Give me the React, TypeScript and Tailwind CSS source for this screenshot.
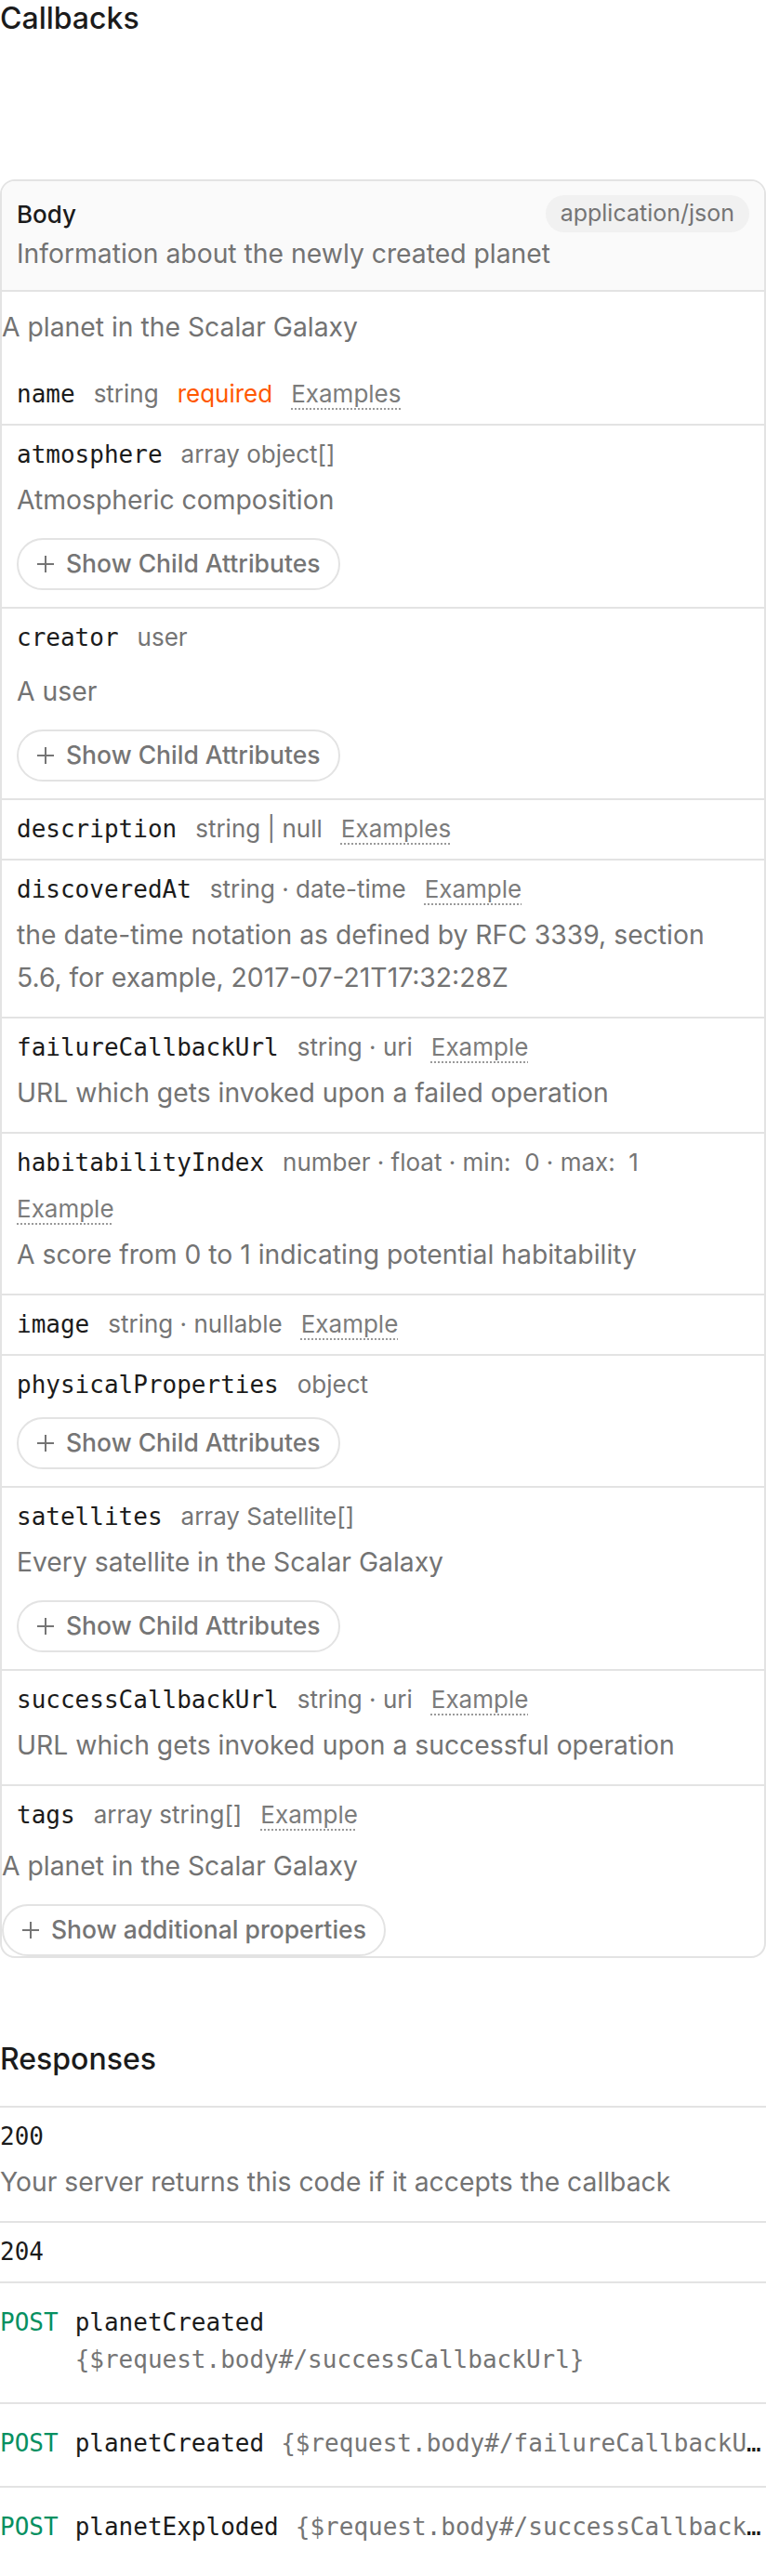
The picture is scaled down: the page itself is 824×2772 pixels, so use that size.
type Prop = {
  name: string;
  type: string;
  required?: boolean;
  example?: string;
  desc?: string;
  descFar?: boolean;
  child?: boolean;
};

const props: Prop[] = [
  { name: 'name', type: 'string', required: true, example: 'Examples' },
  { name: 'atmosphere', type: 'array object[]', desc: 'Atmospheric composition', child: true },
  { name: 'creator', type: 'user', desc: 'A user', descFar: true, child: true },
  { name: 'description', type: 'string | null', example: 'Examples' },
  {
    name: 'discoveredAt',
    type: 'string · date-time',
    example: 'Example',
    desc: 'the date-time notation as defined by RFC 3339, section\n5.6, for example, 2017-07-21T17:32:28Z',
  },
  {
    name: 'failureCallbackUrl',
    type: 'string · uri',
    example: 'Example',
    desc: 'URL which gets invoked upon a failed operation',
  },
  {
    name: 'habitabilityIndex',
    type: 'number · float · min:\u00a0\u00a00 · max:\u00a0\u00a01',
    example: 'Example',
    desc: 'A score from 0 to 1 indicating potential habitability',
  },
  { name: 'image', type: 'string · nullable', example: 'Example' },
  { name: 'physicalProperties', type: 'object', child: true },
  { name: 'satellites', type: 'array Satellite[]', desc: 'Every satellite in the Scalar Galaxy', child: true },
  {
    name: 'successCallbackUrl',
    type: 'string · uri',
    example: 'Example',
    desc: 'URL which gets invoked upon a successful operation',
  },
  { name: 'tags', type: 'array string[]', example: 'Example' },
];

function PlusIcon() {
  return (
    <svg width="18" height="18" viewBox="0 0 18 18" fill="none" stroke="#757575" strokeWidth="2">
      <path d="M9 0v18M0 9h18" />
    </svg>
  );
}

function ShowButton({ label, className = '' }: { label: string; className?: string }) {
  return (
    <button
      className={`flex h-[56px] items-center gap-[13px] rounded-full border-2 border-[#e3e3e3] pl-[20px] pr-[19px] text-[26.5px] font-medium text-[#757575] ${className}`}
    >
      <PlusIcon />
      {label}
    </button>
  );
}

function PropertyRow({ p, first }: { p: Prop; first: boolean }) {
  return (
    <div
      className={`flex flex-col items-start px-4 pt-[11px] pb-[12px] ${first ? '' : 'border-t-2 border-[#e3e3e3]'}`}
    >
      <div className="flex flex-wrap items-baseline gap-x-[20px] gap-y-[10px]">
        <span className="font-['DejaVu_Sans_Mono',monospace] text-[26px] leading-[40px] text-[#1b1b1b]">
          {p.name}
        </span>
        <span className="text-[26px] leading-[40px] text-[#757575]">{p.type}</span>
        {p.required && <span className="text-[26px] leading-[40px] text-[#ff5800]">required</span>}
        {p.example && (
          <span className="text-[26px] leading-[40px] text-[#7c7c7c] underline decoration-dotted decoration-[#9a9a9a] decoration-2 underline-offset-[6px]">
            {p.example}
          </span>
        )}
      </div>
      {p.desc && (
        <p
          className={`whitespace-pre-line text-[28.3px] leading-[46px] text-[#737373] ${p.descFar ? 'mt-[15px]' : 'mt-[6px]'} mb-[7px]`}
        >
          {p.desc}
        </p>
      )}
      {p.child && (
        <ShowButton label="Show Child Attributes" className={`mb-[6px] ${p.desc ? 'mt-[11px]' : 'mt-[15px]'}`} />
      )}
    </div>
  );
}

function CallbackRow({ name, path, wrap }: { name: string; path: string; wrap?: boolean }) {
  return (
    <div className="border-t-2 border-[#e3e3e3] pt-[22px] pb-[26px] font-['DejaVu_Sans_Mono',monospace] text-[26px] leading-[40px]">
      {wrap ? (
        <div className="flex gap-[18px]">
          <span className="text-[#069061]">POST</span>
          <div>
            <div className="text-[#1b1b1b]">{name}</div>
            <div className="text-[#757575]">{path}</div>
          </div>
        </div>
      ) : (
        <div className="truncate">
          <span className="mr-[18px] text-[#069061]">POST</span>
          <span className="mr-[18px] text-[#1b1b1b]">{name}</span>
          <span className="text-[#757575]">{path}</span>
        </div>
      )}
    </div>
  );
}

export default function App() {
  return (
    <div className="w-[824px] bg-white pb-[2px] font-['Inter',sans-serif] text-[#1b1b1b]">
      <h2 className="text-[32px] leading-[40px] font-medium">Callbacks</h2>

      <div className="mt-[153px] flex flex-col items-start overflow-hidden rounded-2xl border-2 border-[#e3e3e3]">
        <div className="w-full border-b-2 border-[#e3e3e3] bg-[#fafafa] px-4 pt-[15px] pb-[18px]">
          <div className="flex h-[40px] items-center justify-between">
            <span className="text-[26px] font-medium text-[#1b1b1b]">Body</span>
            <span className="flex h-[40px] items-center rounded-full bg-[#f1f1f1] px-[16px] text-[25px] text-[#757575]">
              application/json
            </span>
          </div>
          <p className="mt-[2px] text-[28.3px] leading-[42px] text-[#737373]">
            Information about the newly created planet
          </p>
        </div>

        <p className="mt-[15px] mb-[18px] text-[28.3px] leading-[46px] text-[#737373]">
          A planet in the Scalar Galaxy
        </p>

        <div className="w-full">
          {props.map((p, i) => (
            <PropertyRow key={p.name} p={p} first={i === 0} />
          ))}
        </div>

        <p className="text-[28.3px] leading-[46px] text-[#737373]">A planet in the Scalar Galaxy</p>
        <ShowButton label="Show additional properties" className="mt-[18px]" />
      </div>

      <h2 className="mt-[89px] text-[32px] leading-[40px] font-medium">Responses</h2>
      <div className="mt-[30px]">
        <div className="border-t-2 border-[#e3e3e3] pt-[11px] pb-[12px]">
          <div className="font-['DejaVu_Sans_Mono',monospace] text-[26px] leading-[40px]">200</div>
          <p className="mt-[6px] mb-[7px] text-[28.3px] leading-[46px] text-[#737373]">
            Your server returns this code if it accepts the callback
          </p>
        </div>
        <div className="border-t-2 border-[#e3e3e3] pt-[11px] pb-[12px]">
          <div className="font-['DejaVu_Sans_Mono',monospace] text-[26px] leading-[40px]">204</div>
        </div>
        <CallbackRow name="planetCreated" path="{$request.body#/successCallbackUrl}" wrap />
        <CallbackRow name="planetCreated" path="{$request.body#/failureCallbackUrl}" />
        <CallbackRow name="planetExploded" path="{$request.body#/successCallbackUrl}" />
      </div>
    </div>
  );
}
